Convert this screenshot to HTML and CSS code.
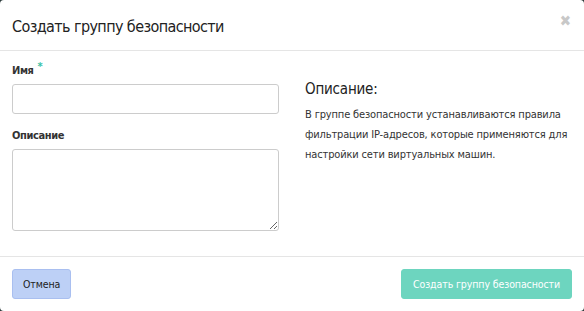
FILE: index.html
```html
<!DOCTYPE html>
<html lang="ru">
<head>
  <meta charset="UTF-8">
  <title>Создать группу безопасности</title>
  <link rel="stylesheet" href="styles.css">
</head>
<body>
  <div class="modal">
    <div class="modal-header">
      <h4>Создать группу безопасности</h4>
      <span class="close">&#10006;</span>
    </div>

    <div class="modal-body">
      <div class="form-col">
        <div class="field">
          <label>Имя <span class="req">*</span></label>
          <input type="text" class="control">
        </div>
        <div class="field">
          <label>Описание</label>
          <textarea class="control area"></textarea>
        </div>
      </div>
      <div class="help-col">
        <h3>Описание:</h3>
        <p>В группе безопасности устанавливаются правила фильтрации IP-адресов, которые применяются для настройки сети виртуальных машин.</p>
      </div>
    </div>

    <div class="modal-footer">
      <button class="btn btn-cancel">Отмена</button>
      <button class="btn btn-submit">Создать группу безопасности</button>
    </div>
  </div>
</body>
</html>
```

FILE: styles.css
```css
* {
  margin: 0;
  padding: 0;
  box-sizing: border-box;
}

body {
  width: 584px;
  height: 311px;
  background: #2b3a3a;
  font-family: 'DejaVu Sans Condensed', 'DejaVu Sans', sans-serif;
  font-stretch: condensed;
  color: #222;
  overflow: hidden;
}

.modal {
  width: 584px;
  height: 311px;
  background: #fff;
  border-radius: 4px;
  display: flex;
  flex-direction: column;
}

.modal-header {
  height: 51px;
  border-bottom: 1px solid #e5e5e5;
  display: flex;
  align-items: center;
  justify-content: space-between;
  padding: 0 13px 0 12px;
}

.modal-header h4 {
  font-size: 16px;
  font-weight: 400;
  letter-spacing: -0.6px;
  color: #222;
  padding-top: 2px;
}

.close {
  color: #c8c8c8;
  font-size: 15px;
  font-family: 'DejaVu Sans', sans-serif;
  font-weight: 700;
  margin-top: -8px;
}

.modal-body {
  flex: 1;
  display: flex;
  padding: 13px 12px 0;
  gap: 26px;
}

.form-col {
  width: 267px;
  flex-shrink: 0;
  display: flex;
  flex-direction: column;
  gap: 15px;
}

.field label {
  display: block;
  font-size: 11px;
  font-weight: 700;
  letter-spacing: -0.4px;
  color: #333;
  margin-bottom: 7px;
}

.req {
  color: #3ac1a6;
  font-size: 11px;
  position: relative;
  top: -4px;
  margin-left: 1px;
}

.control {
  display: block;
  width: 267px;
  height: 30px;
  border: 1px solid #ccc;
  border-radius: 3px;
  background: #fff;
  font-family: inherit;
}

.area {
  height: 82px;
  resize: vertical;
}

.help-col {
  width: 264px;
  padding-top: 16px;
}

.help-col h3 {
  font-size: 15px;
  font-weight: 400;
  letter-spacing: -0.2px;
  color: #222;
  margin-bottom: 7px;
}

.help-col p {
  font-size: 11px;
  letter-spacing: -0.15px;
  line-height: 20px;
  color: #333;
}

.modal-footer {
  height: 55px;
  border-top: 1px solid #e5e5e5;
  display: flex;
  align-items: center;
  justify-content: space-between;
  padding: 0 12px 0 12px;
}

.btn {
  height: 30px;
  border-radius: 3px;
  font-family: inherit;
  font-stretch: condensed;
  font-size: 10.5px;
  letter-spacing: -0.1px;
  padding: 0 10px;
}

.btn-cancel {
  background: #bdd0f6;
  border: 1px solid #a9bff0;
  color: #222;
}

.btn-submit {
  background: #6dd5bf;
  border: 1px solid #6dd5bf;
  color: #fff;
  padding: 0 11px;
}
```
